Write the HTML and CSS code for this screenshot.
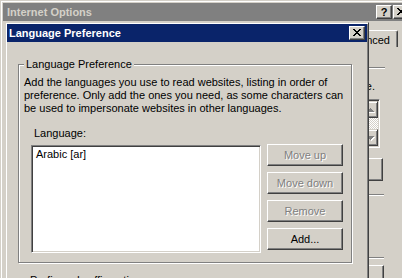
FILE: index.html
```html
<!DOCTYPE html>
<html lang="en">
<head>
    <meta charset="UTF-8">
    <title>Language Preference</title>
    <link rel="stylesheet" href="styles.css">
</head>
<body>
    <div class="ie-window">
        <div class="caption inactive">
            <span class="caption-title">Internet Options</span>
            <button class="cap-btn help">?</button>
            <button class="cap-btn close">
                <svg width="8" height="7" viewBox="0 0 8 7"><path d="M0 0h2v1H0zM6 0h2v1H6zM1 1h2v1H1zM5 1h2v1H5zM2 2h4v1H2zM3 3h2v1H3zM2 4h4v1H2zM1 5h2v1H1zM5 5h2v1H5zM0 6h2v1H0zM6 6h2v1H6z"/></svg>
            </button>
        </div>
        <div class="ie-body">
            <div class="tabs">
                <div class="tab">Advanced</div>
            </div>
            <div class="page">
                <div class="etched sep-top"></div>
                <p class="page-text">use.</p>
                <div class="small-list">
                    <div class="scrollbar">
                        <div class="scroll-btn"><svg width="7" height="4" viewBox="0 0 7 4"><path d="M3 0h1v1h1v1h1v1h1v1H0V3h1V2h1V1h1z"/></svg></div>
                        <div class="scroll-track"></div>
                        <div class="scroll-btn"><svg width="7" height="4" viewBox="0 0 7 4"><path d="M0 0h7v1H6v1H5v1H4v1H3V3H2V2H1V1H0z"/></svg></div>
                    </div>
                </div>
                <div class="page-btn btn-mid"></div>
                <div class="etched sep-mid"></div>
                <div class="etched sep-low"></div>
                <div class="page-btn btn-low"></div>
            </div>
        </div>
    </div>

    <div class="dialog">
        <div class="caption">
            <span class="caption-title">Language Preference</span>
            <button class="cap-btn close">
                <svg width="8" height="7" viewBox="0 0 8 7"><path d="M0 0h2v1H0zM6 0h2v1H6zM1 1h2v1H1zM5 1h2v1H5zM2 2h4v1H2zM3 3h2v1H3zM2 4h4v1H2zM1 5h2v1H1zM5 5h2v1H5zM0 6h2v1H0zM6 6h2v1H6z"/></svg>
            </button>
        </div>
        <div class="dlg-body">
            <fieldset class="group">
                <legend>Language Preference</legend>
                <p class="intro">Add the languages you use to read websites, listing in order of<br>preference. Only add the ones you need, as some characters can<br>be used to impersonate websites in other languages.</p>
                <div class="lang-grid">
                    <label class="lang-label">Language:</label>
                    <div class="listbox">
                        <div class="list-item">Arabic [ar]</div>
                    </div>
                    <div class="btn-col">
                        <button class="btn" disabled>Move up</button>
                        <button class="btn" disabled>Move down</button>
                        <button class="btn" disabled>Remove</button>
                        <button class="btn">Add...</button>
                    </div>
                </div>
            </fieldset>
            <p class="prefix">Prefix and suffix options</p>
        </div>
    </div>
</body>
</html>
```

FILE: styles.css
```css
body {
    margin: 0;
    width: 402px;
    height: 278px;
    overflow: hidden;
    position: relative;
    background: #d4d0c8;
    font: 11px/13px "Liberation Sans", Arial, sans-serif;
    color: #000;
}
p {
    margin: 0;
}

/* window frames */
.ie-window {
    position: absolute;
    left: 0;
    top: 0;
    width: 414px;
    height: 300px;
    box-sizing: border-box;
    padding: 2px;
    border: 1px solid #d4d0c8;
    box-shadow: inset 1px 1px #fff, inset -1px -1px #808080;
    background: #d4d0c8;
}
.dialog {
    position: absolute;
    left: 5px;
    top: 22px;
    width: 364px;
    height: 270px;
    box-sizing: border-box;
    padding: 1px;
    border: 1px solid;
    border-color: #d4d0c8 #404040 #404040 #d4d0c8;
    box-shadow: inset 1px 1px #fff, inset -1px -1px #808080;
    background: #d4d0c8;
}
.caption {
    display: flex;
    align-items: center;
    height: 18px;
    padding: 0 2px 0 2px;
    background: #0a246a;
    color: #fff;
    font-weight: bold;
}
.caption.inactive {
    background: #808080;
    color: #d4d0c8;
    padding-left: 4px;
}
.caption-title {
    flex: 1;
    white-space: nowrap;
}
.cap-btn {
    width: 16px;
    height: 14px;
    box-sizing: border-box;
    padding: 0;
    display: flex;
    align-items: center;
    justify-content: center;
    background: #d4d0c8;
    border: 1px solid;
    border-color: #fff #404040 #404040 #fff;
    box-shadow: inset -1px -1px #808080;
    font: bold 11px/1 "Liberation Sans", Arial, sans-serif;
    color: #000;
}
.cap-btn svg {
    shape-rendering: crispEdges;
    margin: 0 1px 1px 0;
}
.cap-btn.help {
    margin-right: 1px;
}

/* Internet Options behind */
.ie-body {
    padding-top: 9px;
}
.tabs {
    display: flex;
    justify-content: flex-end;
    padding-right: 13px;
}
.tab {
    width: 62px;
    height: 17px;
    box-sizing: border-box;
    padding: 3px 7px 0 0;
    text-align: right;
    border-top: 1px solid #fff;
    border-left: 1px solid #fff;
    border-right: 1px solid #404040;
    border-radius: 2px 2px 0 0;
    box-shadow: inset -1px 0 #808080;
}
.page {
    display: flex;
    flex-direction: column;
    align-items: flex-start;
    padding-left: 9px;
}
.etched {
    height: 0;
    border-top: 1px solid #808080;
    border-bottom: 1px solid #fff;
}
.sep-top {
    width: 373px;
    margin-top: 20px;
}
.page-text {
    width: 363px;
    margin-top: 11px;
    text-align: right;
    white-space: nowrap;
}
.small-list {
    width: 368px;
    height: 49px;
    margin-top: 6px;
    box-sizing: border-box;
    display: flex;
    justify-content: flex-end;
    background: #fff;
    border: 1px solid;
    border-color: #808080 #fff #fff #808080;
    box-shadow: inset 1px 1px #404040, inset -1px -1px #d4d0c8;
    padding: 1px;
}
.scrollbar {
    width: 16px;
    display: flex;
    flex-direction: column;
}
.scroll-btn {
    height: 17px;
    box-sizing: border-box;
    display: flex;
    align-items: center;
    justify-content: center;
    background: #d4d0c8;
    border: 1px solid;
    border-color: #d4d0c8 #404040 #404040 #d4d0c8;
    box-shadow: inset 1px 1px #fff, inset -1px -1px #808080;
}
.scroll-btn svg {
    fill: #808080;
    filter: drop-shadow(1px 1px 0 #fff);
    shape-rendering: crispEdges;
}
.scroll-track {
    flex: 1;
    background: repeating-conic-gradient(#fff 0 25%, #d4d0c8 0 50%) 0 0 / 2px 2px;
}
.page-btn {
    height: 23px;
    box-sizing: border-box;
    border: 1px solid;
    border-color: #fff #404040 #404040 #fff;
    box-shadow: inset -1px -1px #808080;
}
.btn-mid {
    width: 371px;
    margin-top: 10px;
}
.sep-mid {
    width: 372px;
    margin-top: 13px;
}
.sep-low {
    width: 372px;
    margin-top: 61px;
}
.btn-low {
    width: 372px;
    margin-top: 6px;
}

/* Language Preference dialog */
.dlg-body {
    padding: 16px 0 0 11px;
}
.group {
    width: 334px;
    min-width: 0;
    box-sizing: border-box;
    margin: 0;
    padding: 5px 10px 9px 5px;
    border: 1px solid #808080;
    box-shadow: inset 1px 1px #fff, 1px 1px #fff;
}
.group legend {
    padding: 0 2px;
    background: #d4d0c8;
    line-height: 13px;
}
.intro {
    white-space: nowrap;
}
.lang-grid {
    display: grid;
    grid-template-columns: 230px 76px;
    column-gap: 6px;
    row-gap: 5px;
    margin: 12px 0 0 7px;
}
.lang-label {
    grid-column: 1 / 3;
    padding-left: 3px;
}
.listbox {
    height: 108px;
    box-sizing: border-box;
    padding: 2px;
    background: #fff;
    border: 1px solid;
    border-color: #808080 #fff #fff #808080;
    box-shadow: inset 1px 1px #404040, inset -1px -1px #d4d0c8;
}
.list-item {
    padding: 0 2px;
}
.btn-col {
    display: flex;
    flex-direction: column;
    gap: 6px;
    margin-top: -1px;
}
.btn {
    height: 22px;
    padding: 0;
    background: #d4d0c8;
    border: 1px solid;
    border-color: #fff #404040 #404040 #fff;
    box-shadow: inset -1px -1px #808080;
    font: 11px/13px "Liberation Sans", Arial, sans-serif;
    color: #000;
}
.btn:disabled {
    color: #808080;
    text-shadow: 1px 1px 0 #fff;
}
.prefix {
    margin: 11px 0 0 12px;
}
```
